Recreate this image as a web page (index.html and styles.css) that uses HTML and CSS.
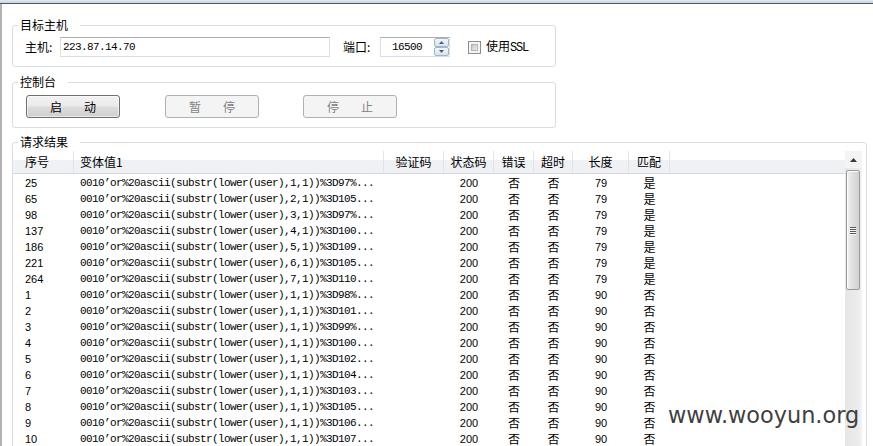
FILE: index.html
```html
<!DOCTYPE html>
<html lang="zh-CN">
<head>
<meta charset="utf-8">
<title>请求结果</title>
<link rel="stylesheet" href="styles.css">
</head>
<body>
<div class="titlebar"></div>
<div class="window">
  <fieldset class="group g-host">
    <legend>目标主机</legend>
    <div class="host-row">
      <span class="lbl lbl-host">主机:</span>
      <div class="textbox host-input">223.87.14.70</div>
      <span class="lbl lbl-port">端口:</span>
      <div class="textbox port-input">
        <span class="port-val">16500</span>
        <svg class="spinner" width="15" height="18" viewBox="0 0 15 18">
          <defs>
            <linearGradient id="spg" x1="0" y1="0" x2="0" y2="1">
              <stop offset="0" stop-color="#f3f7fb"/>
              <stop offset="1" stop-color="#d6e2ee"/>
            </linearGradient>
          </defs>
          <rect x="0.5" y="0.5" width="14" height="8" rx="1.5" fill="url(#spg)" stroke="#a3b5c9"/>
          <rect x="0.5" y="9.5" width="14" height="8" rx="1.5" fill="url(#spg)" stroke="#a3b5c9"/>
          <path d="M5 6 L7.5 3 L10 6 Z" fill="#4a5e7c"/>
          <path d="M5 12 L7.5 15 L10 12 Z" fill="#4a5e7c"/>
        </svg>
      </div>
      <span class="checkbox"><span class="checkbox-inner"></span></span>
      <span class="ssl">使用<span class="mono">SSL</span></span>
    </div>
  </fieldset>

  <fieldset class="group g-console">
    <legend>控制台</legend>
    <div class="btn-row">
      <div class="btn btn-default"><span>启</span><span>动</span></div>
      <div class="btn btn-disabled"><span>暂</span><span>停</span></div>
      <div class="btn btn-disabled btn-last"><span>停</span><span>止</span></div>
    </div>
  </fieldset>

  <fieldset class="group g-result">
    <legend>请求结果</legend>
    <div class="list">
      <div class="list-main">
        <div class="hdr">
          <div class="hc hc-left c1">序号</div>
          <div class="hc hc-left c2">变体值1</div>
          <div class="hc">验证码</div>
          <div class="hc">状态码</div>
          <div class="hc">错误</div>
          <div class="hc">超时</div>
          <div class="hc">长度</div>
          <div class="hc">匹配</div>
          <div class="hc hc-rest"></div>
        </div>
        <div class="rows">
          <div class="row"><span class="c1 num">25</span><span class="c2 val">0010’or%20ascii(substr(lower(user),1,1))%3D97%...</span><span></span><span class="num ctr">200</span><span class="ctr">否</span><span class="ctr">否</span><span class="num ctr">79</span><span class="ctr">是</span><span></span></div>
          <div class="row"><span class="c1 num">65</span><span class="c2 val">0010’or%20ascii(substr(lower(user),2,1))%3D105...</span><span></span><span class="num ctr">200</span><span class="ctr">否</span><span class="ctr">否</span><span class="num ctr">79</span><span class="ctr">是</span><span></span></div>
          <div class="row"><span class="c1 num">98</span><span class="c2 val">0010’or%20ascii(substr(lower(user),3,1))%3D97%...</span><span></span><span class="num ctr">200</span><span class="ctr">否</span><span class="ctr">否</span><span class="num ctr">79</span><span class="ctr">是</span><span></span></div>
          <div class="row"><span class="c1 num">137</span><span class="c2 val">0010’or%20ascii(substr(lower(user),4,1))%3D100...</span><span></span><span class="num ctr">200</span><span class="ctr">否</span><span class="ctr">否</span><span class="num ctr">79</span><span class="ctr">是</span><span></span></div>
          <div class="row"><span class="c1 num">186</span><span class="c2 val">0010’or%20ascii(substr(lower(user),5,1))%3D109...</span><span></span><span class="num ctr">200</span><span class="ctr">否</span><span class="ctr">否</span><span class="num ctr">79</span><span class="ctr">是</span><span></span></div>
          <div class="row"><span class="c1 num">221</span><span class="c2 val">0010’or%20ascii(substr(lower(user),6,1))%3D105...</span><span></span><span class="num ctr">200</span><span class="ctr">否</span><span class="ctr">否</span><span class="num ctr">79</span><span class="ctr">是</span><span></span></div>
          <div class="row"><span class="c1 num">264</span><span class="c2 val">0010’or%20ascii(substr(lower(user),7,1))%3D110...</span><span></span><span class="num ctr">200</span><span class="ctr">否</span><span class="ctr">否</span><span class="num ctr">79</span><span class="ctr">是</span><span></span></div>
          <div class="row"><span class="c1 num">1</span><span class="c2 val">0010’or%20ascii(substr(lower(user),1,1))%3D98%...</span><span></span><span class="num ctr">200</span><span class="ctr">否</span><span class="ctr">否</span><span class="num ctr">90</span><span class="ctr">否</span><span></span></div>
          <div class="row"><span class="c1 num">2</span><span class="c2 val">0010’or%20ascii(substr(lower(user),1,1))%3D101...</span><span></span><span class="num ctr">200</span><span class="ctr">否</span><span class="ctr">否</span><span class="num ctr">90</span><span class="ctr">否</span><span></span></div>
          <div class="row"><span class="c1 num">3</span><span class="c2 val">0010’or%20ascii(substr(lower(user),1,1))%3D99%...</span><span></span><span class="num ctr">200</span><span class="ctr">否</span><span class="ctr">否</span><span class="num ctr">90</span><span class="ctr">否</span><span></span></div>
          <div class="row"><span class="c1 num">4</span><span class="c2 val">0010’or%20ascii(substr(lower(user),1,1))%3D100...</span><span></span><span class="num ctr">200</span><span class="ctr">否</span><span class="ctr">否</span><span class="num ctr">90</span><span class="ctr">否</span><span></span></div>
          <div class="row"><span class="c1 num">5</span><span class="c2 val">0010’or%20ascii(substr(lower(user),1,1))%3D102...</span><span></span><span class="num ctr">200</span><span class="ctr">否</span><span class="ctr">否</span><span class="num ctr">90</span><span class="ctr">否</span><span></span></div>
          <div class="row"><span class="c1 num">6</span><span class="c2 val">0010’or%20ascii(substr(lower(user),1,1))%3D104...</span><span></span><span class="num ctr">200</span><span class="ctr">否</span><span class="ctr">否</span><span class="num ctr">90</span><span class="ctr">否</span><span></span></div>
          <div class="row"><span class="c1 num">7</span><span class="c2 val">0010’or%20ascii(substr(lower(user),1,1))%3D103...</span><span></span><span class="num ctr">200</span><span class="ctr">否</span><span class="ctr">否</span><span class="num ctr">90</span><span class="ctr">否</span><span></span></div>
          <div class="row"><span class="c1 num">8</span><span class="c2 val">0010’or%20ascii(substr(lower(user),1,1))%3D105...</span><span></span><span class="num ctr">200</span><span class="ctr">否</span><span class="ctr">否</span><span class="num ctr">90</span><span class="ctr">否</span><span></span></div>
          <div class="row"><span class="c1 num">9</span><span class="c2 val">0010’or%20ascii(substr(lower(user),1,1))%3D106...</span><span></span><span class="num ctr">200</span><span class="ctr">否</span><span class="ctr">否</span><span class="num ctr">90</span><span class="ctr">否</span><span></span></div>
          <div class="row"><span class="c1 num">10</span><span class="c2 val">0010’or%20ascii(substr(lower(user),1,1))%3D107...</span><span></span><span class="num ctr">200</span><span class="ctr">否</span><span class="ctr">否</span><span class="num ctr">90</span><span class="ctr">否</span><span></span></div>
        </div>
      </div>
      <div class="sb">
        <div class="sb-up">
          <svg width="7" height="4" viewBox="0 0 7 4"><path d="M0 4 L3.5 0 L7 4 Z" fill="#3a3a3a"/></svg>
        </div>
        <div class="sb-thumb">
          <span class="grip"></span><span class="grip"></span><span class="grip"></span><span class="grip"></span>
        </div>
      </div>
    </div>
  </fieldset>
</div>
<div class="watermark">www.wooyun.org</div>
</body>
</html>
```

FILE: styles.css
```css
html, body {
  margin: 0;
  padding: 0;
}
body {
  background: #ffffff;
  font-family: "Noto Sans CJK SC", "Liberation Sans", sans-serif;
  font-size: 12px;
  color: #000;
  height: 446px;
  overflow: hidden;
  position: relative;
}
.titlebar {
  height: 3px;
  background: linear-gradient(#e2e8ef, #c9d4e0);
  border-bottom: 1px solid #4e5762;
}
.window {
  box-sizing: border-box;
  height: 442px;
  overflow: hidden;
  border-left: 2px solid #b2b2b2;
  padding: 14px 0 0 10px;
  display: flex;
  flex-direction: column;
  align-items: flex-start;
}
.group {
  margin: 0;
  border: 1px solid #d5dfe5;
  border-radius: 3px;
  min-width: 0;
  box-sizing: border-box;
  flex: none;
}
.group legend {
  margin-left: 5px;
  padding: 0 12px 0 2px;
  line-height: 14px;
  height: 14px;
  font-size: 12px;
}
.g-host {
  width: 544px;
  padding: 5px 0 9px 0;
  margin-bottom: 8px;
}
.g-console {
  width: 544px;
  padding: 6px 0 9px 0;
  margin-bottom: 7px;
}
.g-result {
  width: 855px;
  height: 330px;
  padding: 2px 4px 0 0;
}

/* host row */
.host-row {
  display: flex;
  align-items: center;
  height: 20px;
  padding-left: 12px;
}
.lbl {
  line-height: 14px;
  white-space: nowrap;
}
.lbl-host { width: 35px; }
.lbl-port { width: 37px; margin-left: 13px; }
.textbox {
  box-sizing: border-box;
  height: 20px;
  border: 1px solid #dadfe6;
  border-top-color: #abadb3;
  background: #fff;
  font-family: "Liberation Mono", monospace;
  font-size: 11px;
  letter-spacing: -0.6px;
  line-height: 18px;
}
.host-input {
  width: 270px;
  padding-left: 2px;
}
.port-input {
  width: 70px;
  display: flex;
  align-items: flex-start;
  padding-left: 11px;
}
.port-val {
  flex: 1;
}
.spinner {
  display: block;
  flex: none;
}
.checkbox {
  box-sizing: border-box;
  width: 13px;
  height: 13px;
  border: 1px solid #8e8f8f;
  background: #f4f4f4;
  padding: 2px;
  margin-left: 18px;
  display: flex;
}
.checkbox-inner {
  flex: 1;
  border: 1px solid #b5b5b5;
  background: linear-gradient(135deg, #c6c6c6, #eeeeee);
}
.ssl {
  margin-left: 5px;
  line-height: 14px;
}
.mono {
  font-family: "Liberation Mono", monospace;
  font-size: 12px;
  letter-spacing: -1.2px;
}

/* buttons */
.btn-row {
  display: flex;
  height: 23px;
  padding-left: 13px;
}
.btn {
  box-sizing: border-box;
  width: 94px;
  height: 23px;
  border-radius: 3px;
  display: flex;
  justify-content: center;
  align-items: center;
  gap: 22px;
  margin-right: 45px;
  line-height: 14px;
}
.btn-last { margin-right: 0; margin-left: -1px; }
.btn-default {
  border: 1px solid #707070;
  background: linear-gradient(#f2f2f2 0%, #ebebeb 48%, #dddddd 52%, #cfcfcf 100%);
  box-shadow: inset 0 0 0 1px rgba(255, 255, 255, 0.55);
  color: #000;
}
.btn-disabled {
  border: 1px solid #adb2b5;
  background: #f4f4f4;
  color: #838383;
}

/* list */
.list {
  display: flex;
  height: 300px;
}
.list-main {
  flex: 1;
  min-width: 0;
}
.hdr, .row {
  display: grid;
  grid-template-columns: 61px 310px 60px 50px 40px 39px 56px 41px 1fr;
}
.hdr {
  height: 22px;
  border-bottom: 1px solid #d5d8dc;
  background: linear-gradient(#ffffff 0, #ffffff 40%, #eff1f4 41%, #eff1f4 100%);
}
.hc {
  border-right: 1px solid #e0e3e8;
  display: flex;
  align-items: center;
  justify-content: center;
  line-height: 14px;
  white-space: nowrap;
}
.hc-left { justify-content: flex-start; }
.hc.c1 { padding-left: 12px; }
.hc.c2 { padding-left: 6px; }
.hc-rest { border-right: none; }
.rows {
  padding-top: 1px;
}
.row {
  height: 16px;
  line-height: 16px;
  white-space: nowrap;
}
.row > span {
  overflow: hidden;
}
.row .c1 { padding-left: 12px; }
.row .c2 { padding-left: 6px; }
.num {
  font-family: "Liberation Sans", sans-serif;
  font-size: 11px;
}
.val {
  font-family: "Liberation Mono", monospace;
  font-size: 11px;
  letter-spacing: -0.6px;
}
.ctr { text-align: center; }

/* scrollbar */
.sb {
  width: 17px;
  flex: none;
  background: linear-gradient(90deg, #e6e6e6, #ececec 80%, #f4f4f4);
  display: flex;
  flex-direction: column;
}
.sb-up {
  height: 17px;
  background: #f4f4f4;
  display: flex;
  align-items: center;
  justify-content: center;
}
.sb-up svg { display: block; }
.sb-thumb {
  box-sizing: border-box;
  height: 120px;
  margin: 2px 2px 0 1px;
  border: 1px solid #9a9a9a;
  border-radius: 2px;
  background: linear-gradient(90deg, #f1f1f1, #dedede 50%, #d0d0d0);
  box-shadow: inset 1px 1px 0 #fbfbfb;
  display: flex;
  flex-direction: column;
  align-items: center;
  justify-content: center;
  gap: 1px;
}
.grip {
  width: 6px;
  height: 1px;
  background: #555;
  box-shadow: 0 1px 0 #f8f8f8;
}

.watermark {
  position: absolute;
  left: 668px;
  top: 402px;
  font-family: "DejaVu Sans", sans-serif;
  font-size: 22.4px;
  line-height: 26px;
  color: #3f3f3f;
  white-space: nowrap;
}
```
